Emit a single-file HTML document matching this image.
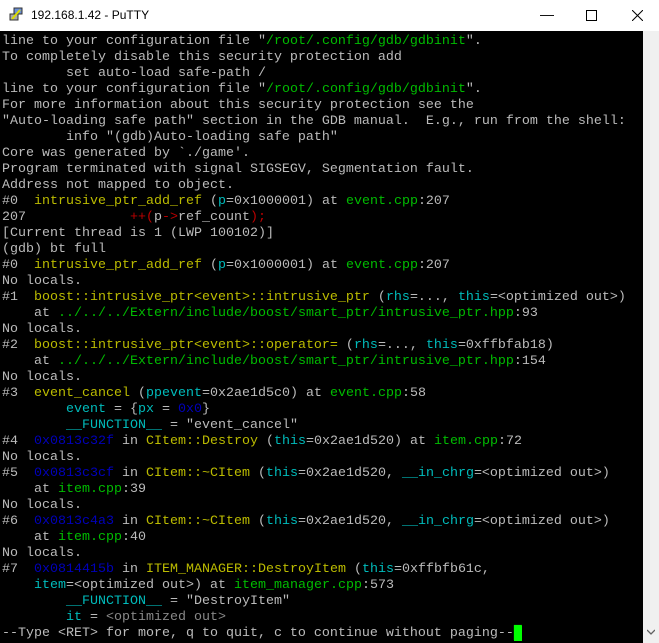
<!DOCTYPE html>
<html><head><meta charset="utf-8"><style>
html,body{margin:0;padding:0;width:659px;height:643px;overflow:hidden;background:#fff}
#tb{position:absolute;left:0;top:0;width:659px;height:31px;background:#fff;font-family:"Liberation Sans",sans-serif;font-size:12px;color:#000}
#tb .t{position:absolute;left:31px;top:8px}
#tb .ic{position:absolute;left:9px;top:7px;width:14px;height:14px}
.wb{position:absolute;top:6px;font-size:14px;color:#000}
#term{position:absolute;left:0;top:31px;width:643px;height:612px;background:#000;overflow:hidden}
pre{margin:0;padding:3px 0 0 2px;font-family:"Liberation Mono",monospace;font-size:13.33px;line-height:16px;color:#bbb;white-space:pre}
.y{color:#bbbb00}.g{color:#00bb00}.c{color:#00bbbb}.b{color:#0000bb}.r{color:#bb0000}.d{color:#888}
#sb{position:absolute;left:643px;top:31px;width:16px;height:612px;background:#f0f0f0}
#th{position:absolute;left:644px;top:388px;width:14px;height:215px;background:#cdcdcd}
.cur{background:#00ff00;color:#00ff00}
</style></head><body>
<div id="tb"><svg class="ic" viewBox="0 0 14 14"><rect x="1" y="7" width="8" height="6" fill="#aaa" stroke="#333"/><rect x="5" y="1" width="8" height="6" fill="#6b8fd6" stroke="#333"/><path d="M3 12 L11 3" stroke="#dd0" stroke-width="2"/></svg><span class="t">192.168.1.42 - PuTTY</span>
<span class="wb" style="left:540px">&#8212;</span>
<svg style="position:absolute;left:586px;top:10px" width="11" height="11"><rect x="0.5" y="0.5" width="10" height="10" fill="none" stroke="#000"/></svg>
<svg style="position:absolute;left:632px;top:10px" width="11" height="11"><path d="M0 0L11 11M11 0L0 11" stroke="#000"/></svg>
</div>
<div id="term"><pre>line to your configuration file "<span class="g">/root/.config/gdb/gdbinit</span>".
To completely disable this security protection add
        set auto-load safe-path /
line to your configuration file "<span class="g">/root/.config/gdb/gdbinit</span>".
For more information about this security protection see the
"Auto-loading safe path" section in the GDB manual.  E.g., run from the shell:
        info "(gdb)Auto-loading safe path"
Core was generated by `./game'.
Program terminated with signal SIGSEGV, Segmentation fault.
Address not mapped to object.
#0  <span class="y">intrusive_ptr_add_ref</span> (<span class="c">p</span>=0x1000001) at <span class="g">event.cpp</span>:207
207             <span class="r">++(</span>p<span class="r">-&gt;</span>ref_count<span class="r">);</span>
[Current thread is 1 (LWP 100102)]
(gdb) bt full
#0  <span class="y">intrusive_ptr_add_ref</span> (<span class="c">p</span>=0x1000001) at <span class="g">event.cpp</span>:207
No locals.
#1  <span class="y">boost::intrusive_ptr&lt;event&gt;::intrusive_ptr</span> (<span class="c">rhs</span>=..., <span class="c">this</span>=&lt;optimized out&gt;)
    at <span class="g">../../../Extern/include/boost/smart_ptr/intrusive_ptr.hpp</span>:93
No locals.
#2  <span class="y">boost::intrusive_ptr&lt;event&gt;::operator=</span> (<span class="c">rhs</span>=..., <span class="c">this</span>=0xffbfab18)
    at <span class="g">../../../Extern/include/boost/smart_ptr/intrusive_ptr.hpp</span>:154
No locals.
#3  <span class="y">event_cancel</span> (<span class="c">ppevent</span>=0x2ae1d5c0) at <span class="g">event.cpp</span>:58
        <span class="c">event</span> = {<span class="c">px</span> = <span class="b">0x0</span>}
        <span class="c">__FUNCTION__</span> = "event_cancel"
#4  <span class="b">0x0813c32f</span> in <span class="y">CItem::Destroy</span> (<span class="c">this</span>=0x2ae1d520) at <span class="g">item.cpp</span>:72
No locals.
#5  <span class="b">0x0813c3cf</span> in <span class="y">CItem::~CItem</span> (<span class="c">this</span>=0x2ae1d520, <span class="c">__in_chrg</span>=&lt;optimized out&gt;)
    at <span class="g">item.cpp</span>:39
No locals.
#6  <span class="b">0x0813c4a3</span> in <span class="y">CItem::~CItem</span> (<span class="c">this</span>=0x2ae1d520, <span class="c">__in_chrg</span>=&lt;optimized out&gt;)
    at <span class="g">item.cpp</span>:40
No locals.
#7  <span class="b">0x0814415b</span> in <span class="y">ITEM_MANAGER::DestroyItem</span> (<span class="c">this</span>=0xffbfb61c,
    <span class="c">item</span>=&lt;optimized out&gt;) at <span class="g">item_manager.cpp</span>:573
        <span class="c">__FUNCTION__</span> = "DestroyItem"
        <span class="c">it</span> = <span class="d">&lt;optimized out&gt;</span>
--Type &lt;RET&gt; for more, q to quit, c to continue without paging--<span class="cur">&#9608;</span></pre></div>
<div id="sb"><div id="th"></div>
<svg style="position:absolute;left:4px;top:598px" width="8" height="6"><path d="M0 1L4 5L8 1" stroke="#606060" fill="none" stroke-width="1.3"/></svg></div>
</body></html>
